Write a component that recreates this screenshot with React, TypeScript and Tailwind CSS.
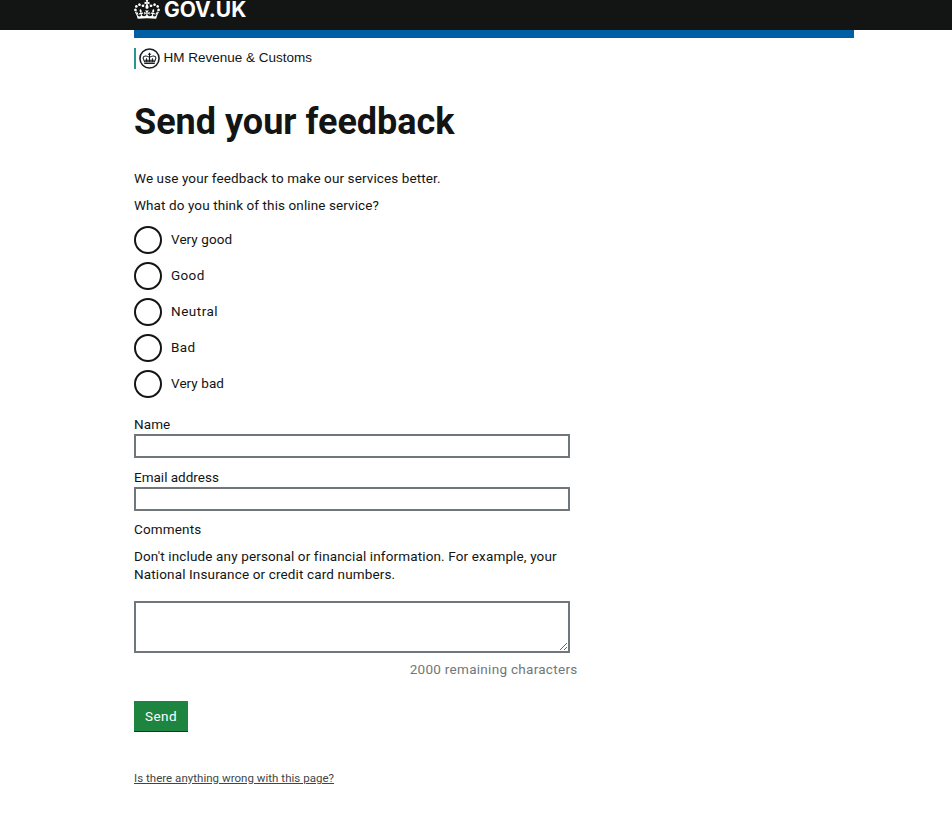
import React from "react";

const CROWN =
  "M25 30.2c3.5 1.5 7.7-.2 9.1-3.7 1.5-3.6-.2-7.8-3.9-9.2-3.6-1.4-7.6.3-9.1 3.9-1.4 3.5.3 7.5 3.9 9zM9 39.5c3.6 1.5 7.8-.2 9.2-3.7 1.5-3.6-.2-7.8-3.9-9.1-3.6-1.5-7.6.2-9.1 3.8-1.4 3.5.3 7.5 3.8 9zM4.4 57.2c3.5 1.5 7.7-.2 9.1-3.8 1.5-3.6-.2-7.7-3.9-9.1-3.5-1.5-7.6.3-9.1 3.8-1.4 3.5.3 7.6 3.9 9.1zm38.3-21.4c3.5 1.5 7.7-.2 9.1-3.8 1.5-3.6-.2-7.7-3.9-9.1-3.6-1.5-7.6.3-9.1 3.8-1.3 3.6.4 7.7 3.9 9.1zm64.4-5.6c-3.6 1.5-7.8-.2-9.1-3.7-1.5-3.6.2-7.8 3.8-9.2 3.6-1.4 7.7.3 9.2 3.9 1.3 3.5-.4 7.5-3.9 9zm15.9 9.3c-3.6 1.5-7.7-.2-9.1-3.7-1.5-3.6.2-7.8 3.7-9.1 3.6-1.5 7.7.2 9.2 3.8 1.5 3.5-.3 7.5-3.8 9zm4.7 17.7c-3.6 1.5-7.8-.2-9.2-3.8-1.5-3.6.2-7.7 3.9-9.1 3.6-1.5 7.7.3 9.2 3.8 1.3 3.5-.4 7.6-3.9 9.1zM89.3 35.8c-3.6 1.5-7.8-.2-9.2-3.8-1.4-3.6.2-7.7 3.9-9.1 3.6-1.5 7.7.3 9.2 3.8 1.4 3.6-.3 7.7-3.9 9.1zM69.7 17.7l8.9 4.7V9.3l-8.9 2.8c-.2-.3-.5-.6-.9-.9L72.4 0H59.6l3.5 11.2c-.3.3-.6.5-.9.9l-8.8-2.8v13.1l8.8-4.7c.3.3.6.7.9.9l-5 15.4v.1c-.2.8-.4 1.6-.4 2.4 0 4.1 3.1 7.5 7 8.1h.2c.3 0 .7.1 1 .1.4 0 .7 0 1-.1h.2c4-.6 7.1-4.1 7.1-8.1 0-.8-.1-1.7-.4-2.4V34l-5.1-15.4c.4-.2.7-.6 1-.9zM66 92.8c16.9 0 32.8 1.1 47.1 3.2 4-16.9 8.9-26.7 14-33.5l-9.6-3.4c1 4.9 1.1 7.2 0 10.2-1.5-1.4-3-4.3-4.2-8.7L108.6 76c2.8-2 5-3.2 7.5-3.3-4.4 9.4-10 11.9-13.6 11.2-4.3-.8-6.3-4.6-5.6-7.9 1-4.7 5.7-5.9 8-.5 4.3-8.7-3-11.4-7.6-8.8 7.1-7.2 7.9-13.5 2.1-21.1-8 6.1-8.1 12.3-4.5 20.8-4.7-5.4-12.1-2.5-9.5 6.2 3.4-5.2 7.9-2 7.2 3.1-.6 4.3-6.4 7.8-13.5 7.2-10.3-.9-10.9-8-11.2-13.8 2.5-.5 7.1 1.8 11 7.3L80.2 60c-4.1 4.4-8 5.3-12.3 5.4 1.4-4.4 8-11.6 8-11.6H55.5s6.4 7.2 7.9 11.6c-4.2-.1-8-1-12.3-5.4l1.4 16.4c3.9-5.5 8.5-7.7 10.9-7.3-.3 5.8-.9 12.8-11.1 13.8-7.2.6-12.9-2.9-13.5-7.2-.7-5 3.8-8.3 7.1-3.1 2.7-8.7-4.6-11.6-9.4-6.2 3.7-8.5 3.6-14.7-4.6-20.8-5.8 7.6-5 13.9 2.2 21.1-4.7-2.6-11.9.1-7.7 8.8 2.3-5.5 7.1-4.2 8.1.5.7 3.3-1.3 7.1-5.7 7.9-3.5.7-9-1.8-13.5-11.2 2.5.1 4.7 1.3 7.5 3.3l-4.7-15.4c-1.2 4.4-2.7 7.2-4.3 8.7-1.1-3-.9-5.3 0-10.2l-9.5 3.4c5 6.9 9.9 16.7 14 33.5 14.8-2.1 30.8-3.2 47.7-3.2z";

function Crest() {
  return (
    <svg className="-mr-px ml-[3px] size-[21px] shrink-0" viewBox="0 0 20 20" fill="none" stroke="#1c1d22">
      <circle cx="10" cy="10" r="9.1" strokeWidth="1.5" />
      <path d="M5 14.8h10M5.3 13.2 3.9 9.6C4 7.2 7.4 6.8 10 8.9c2.6-2.1 6-1.7 6.1.7l-1.4 3.6zM10 4.5v8.7M8.5 6h3M7.2 9.8v3.2M12.8 9.8v3.2M5.5 11.6h9" strokeWidth="1" />
    </svg>
  );
}

const ratings = [
  { label: "Very good", track: "tracking-[0.07px]" },
  { label: "Good", track: "tracking-[0.35px]" },
  { label: "Neutral", track: "tracking-[0.5px]" },
  { label: "Bad", track: "tracking-[0.4px]" },
  { label: "Very bad", track: "tracking-[0.07px]" },
];

export default function App() {
  return (
    <div className="h-[814px] overflow-hidden bg-white font-[Roboto,sans-serif] text-[13.5px] leading-[18px] text-[#131414]">
      <header className="h-[30px] bg-[#131414]">
        <div className="ml-[134px] flex h-[19px] items-center text-white">
          <svg className="-mt-[1px] h-[19px] w-[26px] shrink-0" viewBox="0 0 132 97" fill="currentColor">
            <path d={CROWN} />
          </svg>
          <span className="ml-1 font-[Inter,sans-serif] text-[21px] leading-[19px] font-bold">GOV.UK</span>
        </div>
      </header>
      <main className="ml-[134px] w-[720px]">
        <div className="h-2 bg-[#005ea5]" />
        <div className="mt-[10px] flex h-[21px] items-center border-l-2 border-[#28988f]">
          <Crest />
          <span className="-mt-[2px] ml-[4.5px] font-['Liberation_Sans',sans-serif] text-[13.5px]">HM Revenue &amp; Customs</span>
        </div>
        <h1 className="mt-[33px] h-10 text-[36px] leading-10 font-bold whitespace-nowrap">Send your feedback</h1>
        <p className="mt-[27px] h-[18px] tracking-[0.11px] whitespace-nowrap">We use your feedback to make our services better.</p>
        <p className="mt-[9px] h-[18px] tracking-[0.1px]">What do you think of this online service?</p>
        <div className="mt-3 flex flex-col gap-2">
          {ratings.map((r) => (
            <label key={r.label} className="flex h-7 items-center">
              <input type="radio" name="rating" className="size-7 appearance-none rounded-full border-2 border-[#131414]" />
              <span className={"-mt-[2px] ml-[9px] " + r.track}>{r.label}</span>
            </label>
          ))}
        </div>
        <label className="mt-[17px] block h-[19px] tracking-[0.1px]">Name</label>
        <input className="block h-6 w-[436px] border-2 border-[#6f777b]" />
        <label className="mt-[10px] block h-[19px]">Email address</label>
        <input className="block h-6 w-[436px] border-2 border-[#6f777b]" />
        <label className="mt-[9px] block h-[18px] tracking-[0.15px]">Comments</label>
        <p className="mt-[9px] tracking-[0.14px] whitespace-nowrap">
          Don't include any personal or financial information. For example, your
          <br />
          National Insurance or credit card numbers.
        </p>
        <textarea className="mt-[18px] block h-[52px] w-[436px] resize border-2 border-[#6f777b]" />
        <p className="mt-[7px] w-[443.5px] text-right tracking-[0.29px] text-[#6f777b]">2000 remaining characters</p>
        <button className="mt-[23px] block h-[30px] w-[54px] bg-[#1e8541] tracking-[0.4px] text-white shadow-[0_1px_0_#0b3d20]">Send</button>
        <a className="mt-[38px] block w-fit text-[11.5px] leading-[18px] tracking-[0.03px] whitespace-nowrap text-[#3f4648] underline">
          Is there anything wrong with this page?
        </a>
      </main>
    </div>
  );
}
